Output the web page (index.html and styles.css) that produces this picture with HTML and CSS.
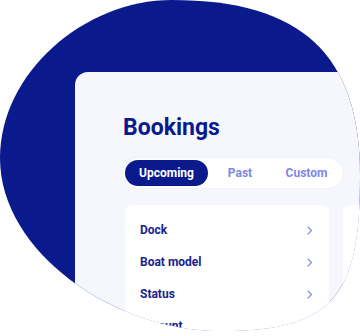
FILE: index.html
```html
<!DOCTYPE html>
<html lang="en">

<head>
    <meta charset="UTF-8">
    <meta name="viewport" content="width=device-width, initial-scale=1.0">
    <title>Bookings</title>
    <link rel="stylesheet" href="styles.css">
</head>

<body>

    <div class="stage">
        <div class="screen">
            <h1>Bookings</h1>

            <div class="tabs">
                <span class="tab tab-upcoming active">Upcoming</span>
                <span class="tab tab-past">Past</span>
                <span class="tab tab-custom">Custom</span>
            </div>

            <div class="cards">
                <div class="filter-card">
                    <div class="row">
                        <span>Dock</span>
                        <svg class="chevron" width="6" height="9" viewBox="0 0 6 9"><polyline points="1,1 4.5,4.5 1,8" /></svg>
                    </div>
                    <div class="row">
                        <span>Boat model</span>
                        <svg class="chevron" width="6" height="9" viewBox="0 0 6 9"><polyline points="1,1 4.5,4.5 1,8" /></svg>
                    </div>
                    <div class="row">
                        <span>Status</span>
                        <svg class="chevron" width="6" height="9" viewBox="0 0 6 9"><polyline points="1,1 4.5,4.5 1,8" /></svg>
                    </div>
                    <div class="row">
                        <span>Amount</span>
                        <svg class="chevron" width="6" height="9" viewBox="0 0 6 9"><polyline points="1,1 4.5,4.5 1,8" /></svg>
                    </div>
                </div>
                <div class="filter-card"></div>
            </div>
        </div>
    </div>

</body>

</html>
```

FILE: styles.css
```css
body {
    font-family: Roboto, "Noto Sans", sans-serif;
    background-color: #fff;
    margin: 0;
    padding: 0;
}

.stage {
    width: 360px;
    height: 336px;
    background-color: #0a1a8c;
    padding: 72px 0 0 75px;
    box-sizing: border-box;
    overflow: hidden;
    clip-path: path("M 172 0 C 302 0 360 55 360 175 C 360 295 335 331 220 331 C 115 331 0 253 0 158 C 0 73 84 0 172 0 Z");
}

.screen {
    width: 420px;
    height: 300px;
    background-color: #f6f7fd;
    border-radius: 13px 0 0 0;
    padding: 42px 0 0 48px;
    box-sizing: border-box;
}

h1 {
    margin: 0;
    font-size: 23px;
    line-height: 28px;
    font-weight: 700;
    color: #0a1a8c;
}

.tabs {
    display: inline-flex;
    margin-top: 16px;
    padding: 2px;
    height: 30px;
    box-sizing: border-box;
    background: #fff;
    border-radius: 15px;
    box-shadow: 0 0 0 1px #eff1fb;
}

.tab {
    display: flex;
    align-items: center;
    justify-content: center;
    font-size: 12px;
    font-weight: 700;
    color: #7e88e2;
    border-radius: 13px;
}

.tab-upcoming {
    width: 83px;
}

.tab-past {
    width: 64px;
}

.tab-custom {
    width: 69px;
}

.tab.active {
    background-color: #0a1a8c;
    color: #fff;
}

.cards {
    display: flex;
    gap: 14px;
    margin-top: 17px;
    margin-left: 2px;
}

.filter-card {
    width: 204px;
    flex-shrink: 0;
    background: #fff;
    border-radius: 8px;
    padding: 9px 16px 0 15px;
    box-sizing: border-box;
    height: 140px;
}

.row {
    display: flex;
    align-items: center;
    justify-content: space-between;
    height: 32px;
    font-size: 12px;
    font-weight: 700;
    color: #17238f;
}

.chevron {
    fill: none;
    stroke: #8c95e8;
    stroke-width: 1.4;
    stroke-linecap: round;
    stroke-linejoin: round;
}
```
